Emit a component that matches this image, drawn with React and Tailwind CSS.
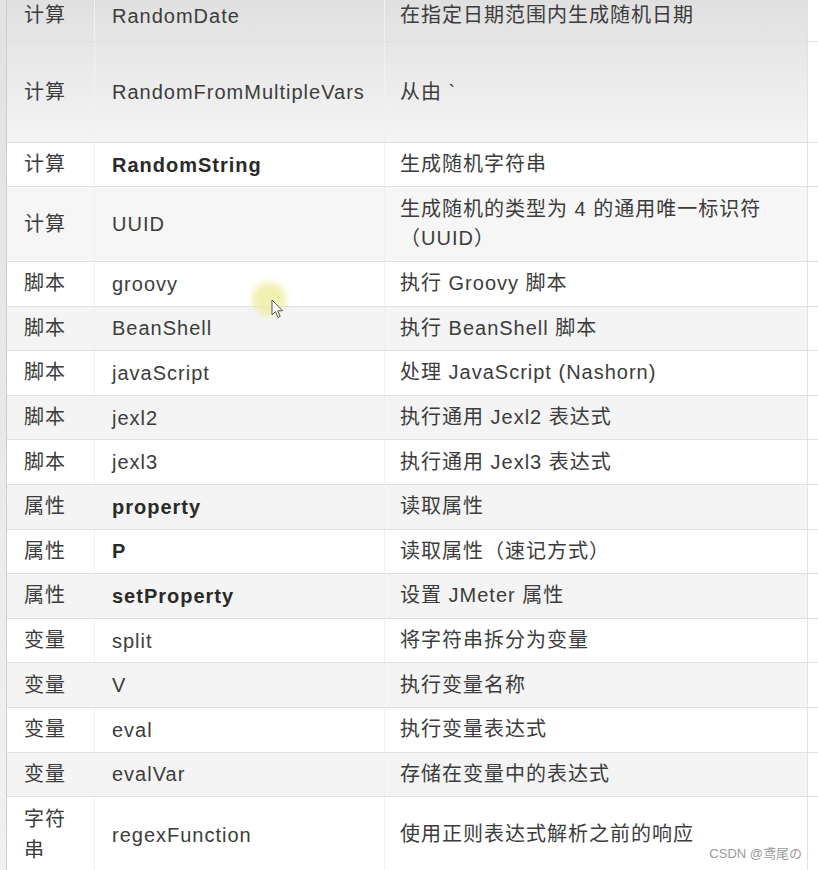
const rows = [
  { cat: "计算", name: "RandomDate", desc: "在指定日期范围内生成随机日期", h: "h-[52px] -mt-[10px]", bg: "bg-linear-to-b from-[#dedede] to-[#e6e6e6]" },
  { cat: "计算", name: "RandomFromMultipleVars", desc: "从由 `", h: "h-[101px]", bg: "bg-linear-to-b from-[#e6e6e6] to-[#f4f4f4]" },
  { cat: "计算", name: "RandomString", desc: "生成随机字符串", h: "h-[44px]", bg: "bg-white", bold: true },
  { cat: "计算", name: "UUID", desc: (<>生成随机的类型为 4 的通用唯一标识符<br />（UUID）</>), h: "h-[75px]", bg: "bg-[#f6f6f6]" },
  { cat: "脚本", name: "groovy", desc: "执行 Groovy 脚本", h: "h-[44.6px]", bg: "bg-white" },
  { cat: "脚本", name: "BeanShell", desc: "执行 BeanShell 脚本", h: "h-[44.6px]", bg: "bg-[#f4f4f4]" },
  { cat: "脚本", name: "javaScript", desc: "处理 JavaScript (Nashorn)", h: "h-[44.6px]", bg: "bg-white" },
  { cat: "脚本", name: "jexl2", desc: "执行通用 Jexl2 表达式", h: "h-[44.6px]", bg: "bg-[#f4f4f4]" },
  { cat: "脚本", name: "jexl3", desc: "执行通用 Jexl3 表达式", h: "h-[44.6px]", bg: "bg-white" },
  { cat: "属性", name: "property", desc: "读取属性", h: "h-[44.6px]", bg: "bg-[#f4f4f4]", bold: true },
  { cat: "属性", name: "P", desc: "读取属性（速记方式）", h: "h-[44.6px]", bg: "bg-white", bold: true },
  { cat: "属性", name: "setProperty", desc: "设置 JMeter 属性", h: "h-[44.6px]", bg: "bg-[#f4f4f4]", bold: true },
  { cat: "变量", name: "split", desc: "将字符串拆分为变量", h: "h-[44.6px]", bg: "bg-white" },
  { cat: "变量", name: "V", desc: "执行变量名称", h: "h-[44.6px]", bg: "bg-[#f4f4f4]" },
  { cat: "变量", name: "eval", desc: "执行变量表达式", h: "h-[44.6px]", bg: "bg-white" },
  { cat: "变量", name: "evalVar", desc: "存储在变量中的表达式", h: "h-[44.6px]", bg: "bg-[#f4f4f4]" },
  { cat: (<>字符<br />串</>), name: "regexFunction", desc: "使用正则表达式解析之前的响应", h: "h-[76px]", bg: "bg-white" },
];

function Row({ r }) {
  return (
    <div className={`flex w-full shrink-0 border-b border-[#e0e0e0] ${r.h} ${r.bg}`}>
      <div className="flex w-[88px] shrink-0 items-center border-r border-[#f1f1f1] pl-[17px] leading-[31px]">
        {r.cat}
      </div>
      <div
        className={`flex w-[290px] shrink-0 items-center border-r border-[#f1f1f1] pl-[17px] ${
          r.bold ? "font-bold text-[#2a2a2a]" : ""
        }`}
      >
        {r.name}
      </div>
      <div className="flex flex-1 items-center border-r border-[#e2e2e2] pl-[15px] leading-[29px]">
        <div>{r.desc}</div>
      </div>
      <div className="w-[10px] shrink-0 bg-white"></div>
    </div>
  );
}

export default function App() {
  return (
    <div
      className="relative flex h-[870px] w-[818px] overflow-hidden bg-white text-[20px] tracking-[1px] text-[#3c3c3c]"
      style={{ fontFamily: '"Liberation Sans", Arial, "Noto Sans CJK SC", sans-serif' }}
    >
      {/* left page edge */}
      <div className="w-[7px] shrink-0 border-r border-[#cdcdcd] bg-linear-to-b from-[#e2e2e2] to-[#f1f1f1]"></div>

      <div className="flex flex-1 flex-col">
        {rows.map((r, i) => (
          <Row key={i} r={r} />
        ))}
      </div>

      {/* mouse cursor with highlight */}
      <div className="absolute left-[252px] top-[282px] h-[34px] w-[34px] rounded-full bg-[#eeeca0] opacity-80 blur-[3px]"></div>
      <svg className="absolute left-[271px] top-[299px]" width="13" height="20" viewBox="0 0 13 20">
        <path d="M1 1 L1 16 L4.5 12.5 L7 18.5 L9.2 17.5 L6.8 11.8 L11.5 11.8 Z" fill="#fff" stroke="#555" strokeWidth="1" strokeLinejoin="round" />
      </svg>

      <div className="absolute bottom-[7px] right-[16px] text-[13px] tracking-normal text-[#9a9a9a]">
        CSDN @鸢尾の
      </div>
    </div>
  );
}
